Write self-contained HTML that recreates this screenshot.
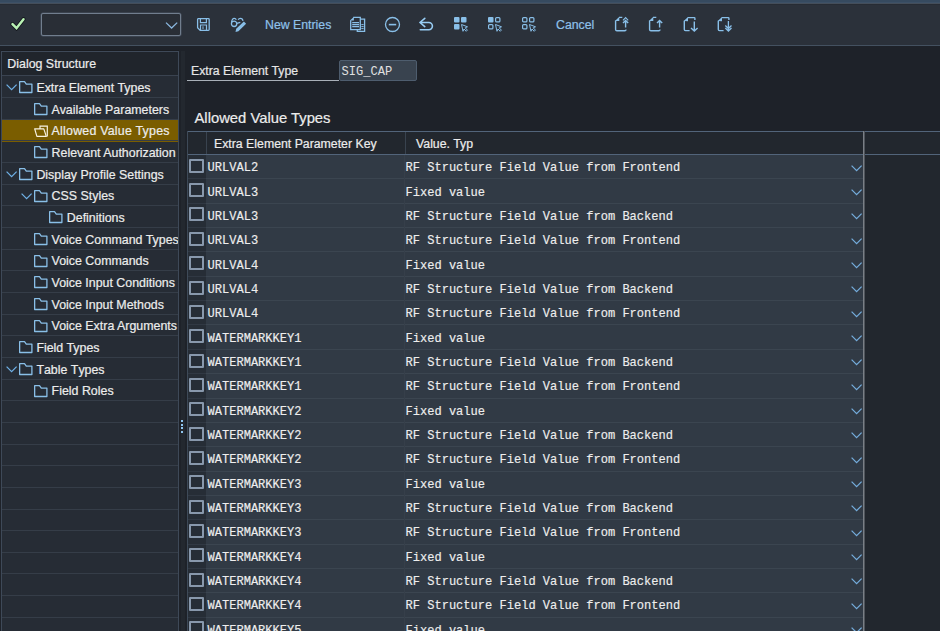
<!DOCTYPE html><html><head><meta charset="utf-8"><style>
*{margin:0;padding:0;box-sizing:border-box}
html,body{width:940px;height:631px;overflow:hidden;background:#1e2229;font-family:"Liberation Sans",sans-serif;position:relative}
.a{position:absolute}
.s{-webkit-text-stroke:0.2px currentColor}
.ttxt{color:#8fc1ea;font-size:12.3px;line-height:14px;white-space:nowrap}
.tr{left:2px;width:176px;height:21.66px;border-bottom:1px solid #353d48}
.tr.sel{background:#7a5d00}
.tt{color:#ececec;font-size:12.4px;white-space:nowrap;line-height:14px}
.mono{font-family:"Liberation Mono",monospace}
.cb{position:absolute;left:189.4px;width:14.4px;height:14px;border:2px solid #8898ac;border-radius:1px}
.kt{-webkit-text-stroke:0.15px currentColor;left:207.5px;color:#eeeeee;font-size:12.05px;line-height:14px;white-space:nowrap}
.vt{-webkit-text-stroke:0.15px currentColor;left:405.5px;color:#eeeeee;font-size:12.05px;line-height:14px;white-space:nowrap}
</style></head><body>

<div class="a" style="left:0;top:0;width:940px;height:46px;background:#2b313a"></div>
<div class="a" style="left:0;top:0;width:940px;height:2px;background:#364a5f"></div>
<div class="a" style="left:0;top:2px;width:940px;height:1px;background:#3c5066"></div>
<div class="a" style="left:0;top:3px;width:940px;height:1px;background:#444e5a"></div>
<div class="a" style="left:0;top:4px;width:940px;height:1px;background:#272c34"></div>
<div class="a" style="left:0;top:45px;width:940px;height:1px;background:#445160"></div>
<svg class="a" style="left:10px;top:15.5px" width="16" height="15" viewBox="0 0 16 15"><path d="M2.5 8.2l4 4 7-9" fill="none" stroke="#12161b" stroke-width="4" stroke-linecap="round"/><path d="M2.5 8.2l4 4 7-9" fill="none" stroke="#b9f2b4" stroke-width="2.5" stroke-linecap="round"/></svg>
<div class="a" style="left:40.5px;top:12.5px;width:140.5px;height:23.5px;border:1px solid #717e8e;box-shadow:0 0 0 0.5px #4a5563;border-radius:2px;background:#292e36"></div>
<svg class="a" style="left:165px;top:20.5px" width="13" height="9" viewBox="0 0 13 9"><path d="M1 1.6L6.6 7L12.2 1.6" fill="none" stroke="#8ab6de" stroke-width="1.3"/></svg>
<svg class="a" style="left:196px;top:17px" width="15" height="15" viewBox="0 0 15 15"><path d="M2.2 1.6h10.2q.8 0 .8.8v10.2q0 .8-.8.8h-8.2l-2.6-2.6v-8.4q0-.8.6-.8z" fill="none" stroke="#89bfe8" stroke-width="1.3"/><path d="M4.4 2v3.6h6v-3.6M4.5 13v-5h6v5" fill="none" stroke="#89bfe8" stroke-width="1.2"/><path d="M7 9.3v2.8" stroke="#89bfe8" stroke-width="1"/></svg>
<svg class="a" style="left:230px;top:17px" width="17" height="17" viewBox="0 0 17 17"><circle cx="4.1" cy="6.8" r="2.7" fill="none" stroke="#89bfe8" stroke-width="1.3"/><path d="M1.5 5.6C1.8 2.6 2.9 1.3 4.3 1.3C5.3 1.3 6 2 6.3 2.8M8.2 2.8C8.6 1.8 9.5 1.3 10.5 1.3C11.8 1.3 12.8 2.3 13 3.8M6.8 6.3L10.3 5.3" fill="none" stroke="#89bfe8" stroke-width="1.2"/><path d="M5.5 14.9L6.19 11.81L13.9 4.44L16.1 6.76L8.41 14.13Z" fill="#89bfe8"/></svg>
<div class="a ttxt s" style="left:265px;top:18px">New Entries</div>
<svg class="a" style="left:349px;top:16px" width="17" height="17" viewBox="0 0 17 17"><path d="M4.3 1.3H11.3V13.6H1.7V4.2" fill="none" stroke="#89bfe8" stroke-width="1.3"/><path d="M1 4.6L4.9 0.7V4.6Z" fill="#89bfe8"/><path d="M3.2 6.6H10M3.2 8.6H10M3.2 10.6H10" stroke="#89bfe8" stroke-width="1.1"/><path d="M11.5 3.2H15.6V15.3H8.3V14" fill="none" stroke="#89bfe8" stroke-width="1.3"/><path d="M12.3 8.6H14.6M12.3 10.6H14.6M12.3 12.6H14.6" stroke="#89bfe8" stroke-width="1"/></svg>
<svg class="a" style="left:383.5px;top:16px" width="17" height="17" viewBox="0 0 17 17"><circle cx="8.5" cy="8.5" r="7" fill="none" stroke="#89bfe8" stroke-width="1.3"/><path d="M4.8 8.6h7.4" stroke="#89bfe8" stroke-width="1.6"/></svg>
<svg class="a" style="left:414px;top:12px" width="24" height="24" viewBox="0 0 24 24"><path d="M10.8 6.3L5.9 10.5L10.8 14.6M5.9 10.5H14.8A3.6 3.6 0 0 1 14.8 17.7H6.3" fill="none" stroke="#98cdf4" stroke-width="1.6" stroke-linejoin="round" stroke-linecap="round"/></svg>
<svg class="a" style="left:453px;top:16px" width="16" height="16" viewBox="0 0 16 16"><rect x="1" y="1" width="5.5" height="5.5" rx="1" fill="#89bfe8"/><rect x="8" y="1" width="5.5" height="5.5" rx="1" fill="#89bfe8"/><rect x="1" y="8" width="5.5" height="5.5" rx="1" fill="#89bfe8"/><path d="M8.5 8.5l6 2.3-2.3 1 2.2 2.3-1.2 1.2-2.2-2.3-1 2.3z" fill="none" stroke="#89bfe8" stroke-width="1"/></svg>
<svg class="a" style="left:487px;top:16px" width="16" height="16" viewBox="0 0 16 16"><rect x="1" y="1" width="5.5" height="5.5" rx="1" fill="#89bfe8"/><rect x="8.6" y="1.6" width="4.3" height="4.3" rx="1" fill="none" stroke="#89bfe8" stroke-width="1.2"/><rect x="1.6" y="8.6" width="4.3" height="4.3" rx="1" fill="none" stroke="#89bfe8" stroke-width="1.2"/><path d="M8.5 8.5l6 2.3-2.3 1 2.2 2.3-1.2 1.2-2.2-2.3-1 2.3z" fill="none" stroke="#89bfe8" stroke-width="1"/></svg>
<svg class="a" style="left:521px;top:16px" width="16" height="16" viewBox="0 0 16 16"><rect x="1.6" y="1.6" width="4.3" height="4.3" rx="1" fill="none" stroke="#89bfe8" stroke-width="1.2"/><rect x="8.6" y="1.6" width="4.3" height="4.3" rx="1" fill="none" stroke="#89bfe8" stroke-width="1.2"/><rect x="1.6" y="8.6" width="4.3" height="4.3" rx="1" fill="none" stroke="#89bfe8" stroke-width="1.2"/><path d="M8.5 8.5l6 2.3-2.3 1 2.2 2.3-1.2 1.2-2.2-2.3-1 2.3z" fill="none" stroke="#89bfe8" stroke-width="1"/></svg>
<div class="a ttxt s" style="left:556px;top:18px">Cancel</div>
<svg class="a" style="left:614px;top:16px" width="17" height="17" viewBox="0 0 17 17"><path d="M5 1.4H8.3M1.6 4.6V13.4Q1.6 14.7 2.9 14.7H10.8Q12 14.7 12 13.4" fill="none" stroke="#89bfe8" stroke-width="1.4"/><path d="M1 4.9L5.3 0.8V5.1Z" fill="#89bfe8"/><path d="M11.6 11.6V4.6M9 7.1L11.6 4.5L14.2 7.1" fill="none" stroke="#89bfe8" stroke-width="1.4"/><path d="M9 4.3L11.6 1.7L14.2 4.3" fill="none" stroke="#89bfe8" stroke-width="1.2"/></svg>
<svg class="a" style="left:648px;top:16px" width="17" height="17" viewBox="0 0 17 17"><path d="M5 1.4H8.3M1.6 4.6V13.4Q1.6 14.7 2.9 14.7H10.8Q12 14.7 12 13.4" fill="none" stroke="#89bfe8" stroke-width="1.4"/><path d="M1 4.9L5.3 0.8V5.1Z" fill="#89bfe8"/><path d="M11.6 11.6V4.6M9 7.1L11.6 4.5L14.2 7.1" fill="none" stroke="#89bfe8" stroke-width="1.4"/></svg>
<svg class="a" style="left:683px;top:16px" width="17" height="17" viewBox="0 0 17 17"><path d="M4.8 1.6H11.2Q11.9 1.6 11.9 2.3V3.9M1.3 4.8V13.5Q1.3 14.6 2.5 14.6H6.6" fill="none" stroke="#89bfe8" stroke-width="1.4"/><path d="M0.7 5.1L5 1V5.3Z" fill="#89bfe8"/><path d="M11.3 5.5V14.6M8 12L11.3 15.1L14.6 12" fill="none" stroke="#89bfe8" stroke-width="1.4"/></svg>
<svg class="a" style="left:717px;top:16px" width="17" height="17" viewBox="0 0 17 17"><path d="M4.8 1.6H11.2Q11.9 1.6 11.9 2.3V3.9M1.3 4.8V13.5Q1.3 14.6 2.5 14.6H6.6" fill="none" stroke="#89bfe8" stroke-width="1.4"/><path d="M0.7 5.1L5 1V5.3Z" fill="#89bfe8"/><path d="M11.4 5V14.2M8.3 9.5L11.4 12.5L14.5 9.5M8.3 12L11.4 15L14.5 12" fill="none" stroke="#89bfe8" stroke-width="1.3"/></svg>
<div class="a" style="left:1px;top:51px;width:178px;height:600px;border:1px solid #3e4958;background:#262c35;box-shadow:0 -1px 0 #1a1d22"></div>
<div class="a" style="left:2px;top:52px;width:176px;height:23px;background:#20252c"></div>
<div class="a tt s" style="left:7.3px;top:57px">Dialog Structure</div>
<div class="a" style="left:2px;top:75px;width:176px;height:1px;background:#3a4350"></div>
<div class="a" style="left:2px;top:97px;width:176px;height:1px;background:#353d48"></div>
<div class="a" style="left:2px;top:119px;width:176px;height:1px;background:#353d48"></div>
<div class="a" style="left:2px;top:119.82px;width:176px;height:22.06px;background:#7a5d00"></div>
<div class="a" style="left:2px;top:140px;width:176px;height:1px;background:#353d48"></div>
<div class="a" style="left:2px;top:162px;width:176px;height:1px;background:#353d48"></div>
<div class="a" style="left:2px;top:184px;width:176px;height:1px;background:#353d48"></div>
<div class="a" style="left:2px;top:205px;width:176px;height:1px;background:#353d48"></div>
<div class="a" style="left:2px;top:227px;width:176px;height:1px;background:#353d48"></div>
<div class="a" style="left:2px;top:249px;width:176px;height:1px;background:#353d48"></div>
<div class="a" style="left:2px;top:270px;width:176px;height:1px;background:#353d48"></div>
<div class="a" style="left:2px;top:292px;width:176px;height:1px;background:#353d48"></div>
<div class="a" style="left:2px;top:314px;width:176px;height:1px;background:#353d48"></div>
<div class="a" style="left:2px;top:335px;width:176px;height:1px;background:#353d48"></div>
<div class="a" style="left:2px;top:357px;width:176px;height:1px;background:#353d48"></div>
<div class="a" style="left:2px;top:379px;width:176px;height:1px;background:#353d48"></div>
<div class="a" style="left:2px;top:400px;width:176px;height:1px;background:#353d48"></div>
<div class="a" style="left:2px;top:422px;width:176px;height:1px;background:#353d48"></div>
<div class="a" style="left:2px;top:444px;width:176px;height:1px;background:#353d48"></div>
<div class="a" style="left:2px;top:465px;width:176px;height:1px;background:#353d48"></div>
<div class="a" style="left:2px;top:487px;width:176px;height:1px;background:#353d48"></div>
<div class="a" style="left:2px;top:509px;width:176px;height:1px;background:#353d48"></div>
<div class="a" style="left:2px;top:530px;width:176px;height:1px;background:#353d48"></div>
<div class="a" style="left:2px;top:552px;width:176px;height:1px;background:#353d48"></div>
<div class="a" style="left:2px;top:573px;width:176px;height:1px;background:#353d48"></div>
<div class="a" style="left:2px;top:595px;width:176px;height:1px;background:#353d48"></div>
<div class="a" style="left:2px;top:617px;width:176px;height:1px;background:#353d48"></div>
<div class="a" style="left:2px;top:638px;width:176px;height:1px;background:#353d48"></div>
<div class="a" style="left:2px;top:660px;width:176px;height:1px;background:#353d48"></div>
<div class="a" style="left:2px;top:51.5px;width:176px;overflow:hidden;height:580px">
<svg class="a" style="left:4.00px;top:32.90px" width="12" height="7" viewBox="0 0 12 7"><path d="M0.6 0.6L5.6 5.6L10.6 0.6" fill="none" stroke="#6fb0e6" stroke-width="1.25"/></svg>
<svg class="a" style="left:16.60px;top:29.90px" width="15" height="13" viewBox="0 0 15 13"><path d="M0.65 0.65H5.5L7.3 3.1H12.9V11.5H0.65Z" fill="none" stroke="#89bfe8" stroke-width="1.3" stroke-linejoin="round"/></svg>
<div class="a tt s" style="left:34.40px;top:29.60px">Extra Element Types</div>
<svg class="a" style="left:31.80px;top:51.56px" width="15" height="13" viewBox="0 0 15 13"><path d="M0.65 0.65H5.5L7.3 3.1H12.9V11.5H0.65Z" fill="none" stroke="#89bfe8" stroke-width="1.3" stroke-linejoin="round"/></svg>
<div class="a tt s" style="left:49.60px;top:51.26px">Available Parameters</div>
<svg class="a" style="left:31.80px;top:73.62px" width="15" height="13" viewBox="0 0 15 13"><path d="M6 3.9V1.2H13.3V11.4" fill="none" stroke="#f8f2e2" stroke-width="1.2"/><path d="M0.7 3.9H9.8L12.3 11.4H2.9Z" fill="none" stroke="#f8f2e2" stroke-width="1.2" stroke-linejoin="round"/></svg>
<div class="a tt s" style="left:49.60px;top:72.92px;letter-spacing:0.22px">Allowed Value Types</div>
<svg class="a" style="left:31.80px;top:94.88px" width="15" height="13" viewBox="0 0 15 13"><path d="M0.65 0.65H5.5L7.3 3.1H12.9V11.5H0.65Z" fill="none" stroke="#89bfe8" stroke-width="1.3" stroke-linejoin="round"/></svg>
<div class="a tt s" style="left:49.60px;top:94.58px">Relevant Authorization</div>
<svg class="a" style="left:4.00px;top:119.54px" width="12" height="7" viewBox="0 0 12 7"><path d="M0.6 0.6L5.6 5.6L10.6 0.6" fill="none" stroke="#6fb0e6" stroke-width="1.25"/></svg>
<svg class="a" style="left:16.60px;top:116.54px" width="15" height="13" viewBox="0 0 15 13"><path d="M0.65 0.65H5.5L7.3 3.1H12.9V11.5H0.65Z" fill="none" stroke="#89bfe8" stroke-width="1.3" stroke-linejoin="round"/></svg>
<div class="a tt s" style="left:34.40px;top:116.24px">Display Profile Settings</div>
<svg class="a" style="left:19.20px;top:141.20px" width="12" height="7" viewBox="0 0 12 7"><path d="M0.6 0.6L5.6 5.6L10.6 0.6" fill="none" stroke="#6fb0e6" stroke-width="1.25"/></svg>
<svg class="a" style="left:31.80px;top:138.20px" width="15" height="13" viewBox="0 0 15 13"><path d="M0.65 0.65H5.5L7.3 3.1H12.9V11.5H0.65Z" fill="none" stroke="#89bfe8" stroke-width="1.3" stroke-linejoin="round"/></svg>
<div class="a tt s" style="left:49.60px;top:137.90px">CSS Styles</div>
<svg class="a" style="left:47.00px;top:159.86px" width="15" height="13" viewBox="0 0 15 13"><path d="M0.65 0.65H5.5L7.3 3.1H12.9V11.5H0.65Z" fill="none" stroke="#89bfe8" stroke-width="1.3" stroke-linejoin="round"/></svg>
<div class="a tt s" style="left:64.80px;top:159.56px">Definitions</div>
<svg class="a" style="left:31.80px;top:181.52px" width="15" height="13" viewBox="0 0 15 13"><path d="M0.65 0.65H5.5L7.3 3.1H12.9V11.5H0.65Z" fill="none" stroke="#89bfe8" stroke-width="1.3" stroke-linejoin="round"/></svg>
<div class="a tt s" style="left:49.60px;top:181.22px">Voice Command Types</div>
<svg class="a" style="left:31.80px;top:203.18px" width="15" height="13" viewBox="0 0 15 13"><path d="M0.65 0.65H5.5L7.3 3.1H12.9V11.5H0.65Z" fill="none" stroke="#89bfe8" stroke-width="1.3" stroke-linejoin="round"/></svg>
<div class="a tt s" style="left:49.60px;top:202.88px">Voice Commands</div>
<svg class="a" style="left:31.80px;top:224.84px" width="15" height="13" viewBox="0 0 15 13"><path d="M0.65 0.65H5.5L7.3 3.1H12.9V11.5H0.65Z" fill="none" stroke="#89bfe8" stroke-width="1.3" stroke-linejoin="round"/></svg>
<div class="a tt s" style="left:49.60px;top:224.54px">Voice Input Conditions</div>
<svg class="a" style="left:31.80px;top:246.50px" width="15" height="13" viewBox="0 0 15 13"><path d="M0.65 0.65H5.5L7.3 3.1H12.9V11.5H0.65Z" fill="none" stroke="#89bfe8" stroke-width="1.3" stroke-linejoin="round"/></svg>
<div class="a tt s" style="left:49.60px;top:246.20px">Voice Input Methods</div>
<svg class="a" style="left:31.80px;top:268.16px" width="15" height="13" viewBox="0 0 15 13"><path d="M0.65 0.65H5.5L7.3 3.1H12.9V11.5H0.65Z" fill="none" stroke="#89bfe8" stroke-width="1.3" stroke-linejoin="round"/></svg>
<div class="a tt s" style="left:49.60px;top:267.86px">Voice Extra Arguments</div>
<svg class="a" style="left:16.60px;top:289.82px" width="15" height="13" viewBox="0 0 15 13"><path d="M0.65 0.65H5.5L7.3 3.1H12.9V11.5H0.65Z" fill="none" stroke="#89bfe8" stroke-width="1.3" stroke-linejoin="round"/></svg>
<div class="a tt s" style="left:34.40px;top:289.52px">Field Types</div>
<svg class="a" style="left:4.00px;top:314.48px" width="12" height="7" viewBox="0 0 12 7"><path d="M0.6 0.6L5.6 5.6L10.6 0.6" fill="none" stroke="#6fb0e6" stroke-width="1.25"/></svg>
<svg class="a" style="left:16.60px;top:311.48px" width="15" height="13" viewBox="0 0 15 13"><path d="M0.65 0.65H5.5L7.3 3.1H12.9V11.5H0.65Z" fill="none" stroke="#89bfe8" stroke-width="1.3" stroke-linejoin="round"/></svg>
<div class="a tt s" style="left:34.40px;top:311.18px;font-kerning:none">Table Types</div>
<svg class="a" style="left:31.80px;top:333.14px" width="15" height="13" viewBox="0 0 15 13"><path d="M0.65 0.65H5.5L7.3 3.1H12.9V11.5H0.65Z" fill="none" stroke="#89bfe8" stroke-width="1.3" stroke-linejoin="round"/></svg>
<div class="a tt s" style="left:49.60px;top:332.84px">Field Roles</div>
</div>
<div class="a" style="left:180.5px;top:51px;width:4px;height:580px;background:#23282f"></div>
<div class="a" style="left:181px;top:420.2px;width:2px;height:2px;background:#8fc6f0"></div>
<div class="a" style="left:181px;top:423.8px;width:2px;height:2px;background:#8fc6f0"></div>
<div class="a" style="left:181px;top:427.4px;width:2px;height:2px;background:#8fc6f0"></div>
<div class="a" style="left:181px;top:431.0px;width:2px;height:2px;background:#8fc6f0"></div>
<div class="a tt s" style="left:191px;top:63.5px;color:#e6e6e6;font-size:12.3px">Extra Element Type</div>
<div class="a" style="left:187px;top:80px;width:152px;height:1px;background:#a9b0b8"></div>
<div class="a" style="left:339px;top:59.5px;width:78px;height:21.5px;border:1px solid #4e5d6e;border-radius:2px;background:#39434f"></div>
<div class="a mono" style="left:341.5px;top:64.7px;color:#e0e0e0;font-size:12.05px;line-height:14px">SIG_CAP</div>
<div class="a s" style="left:194.5px;top:110px;color:#ececec;font-size:14.8px;line-height:16px;white-space:nowrap">Allowed Value Types</div>
<div class="a" style="left:187px;top:131px;width:753px;height:24px;background:#22272e;border-top:1px solid #52647a;border-bottom:1px solid #52647a"></div>
<div class="a" style="left:187px;top:131px;width:1px;height:500px;background:#3e4a58"></div>
<div class="a" style="left:206px;top:132px;width:1px;height:22px;background:#39434f"></div>
<div class="a" style="left:404.5px;top:132px;width:1px;height:22px;background:#39434f"></div>
<div class="a tt s" style="left:214px;top:137px;font-size:12.3px">Extra Element Parameter Key</div>
<div class="a tt s" style="left:416px;top:137px;font-size:12.3px">Value. Typ</div>
<div class="a" style="left:864px;top:155px;width:76px;height:476px;background:#22272e"></div>
<div class="a" style="left:188px;top:155px;width:18px;height:476px;background:#262d36"></div>
<div class="a" style="left:206px;top:155px;width:658px;height:476px;background:#313a45"></div>
<div class="a" style="left:188px;top:178px;width:18px;height:1px;background:#303843"></div>
<div class="a" style="left:206px;top:178px;width:658px;height:1px;background:#3b4550"></div>
<div class="cb" style="top:158.80px"></div>
<div class="a mono kt" style="top:161.20px">URLVAL2</div>
<div class="a mono vt" style="top:161.20px">RF Structure Field Value from Frontend</div>
<svg class="a" style="left:850.50px;top:164.50px" width="12" height="7" viewBox="0 0 12 7"><path d="M0.6 0.6L5.6 5.6L10.6 0.6" fill="none" stroke="#74acdc" stroke-width="1.25"/></svg>
<div class="a" style="left:188px;top:203px;width:18px;height:1px;background:#303843"></div>
<div class="a" style="left:206px;top:203px;width:658px;height:1px;background:#3b4550"></div>
<div class="cb" style="top:183.14px"></div>
<div class="a mono kt" style="top:185.54px">URLVAL3</div>
<div class="a mono vt" style="top:185.54px">Fixed value</div>
<svg class="a" style="left:850.50px;top:188.84px" width="12" height="7" viewBox="0 0 12 7"><path d="M0.6 0.6L5.6 5.6L10.6 0.6" fill="none" stroke="#74acdc" stroke-width="1.25"/></svg>
<div class="a" style="left:188px;top:227px;width:18px;height:1px;background:#303843"></div>
<div class="a" style="left:206px;top:227px;width:658px;height:1px;background:#3b4550"></div>
<div class="cb" style="top:207.48px"></div>
<div class="a mono kt" style="top:209.88px">URLVAL3</div>
<div class="a mono vt" style="top:209.88px">RF Structure Field Value from Backend</div>
<svg class="a" style="left:850.50px;top:213.18px" width="12" height="7" viewBox="0 0 12 7"><path d="M0.6 0.6L5.6 5.6L10.6 0.6" fill="none" stroke="#74acdc" stroke-width="1.25"/></svg>
<div class="a" style="left:188px;top:251px;width:18px;height:1px;background:#303843"></div>
<div class="a" style="left:206px;top:251px;width:658px;height:1px;background:#3b4550"></div>
<div class="cb" style="top:231.82px"></div>
<div class="a mono kt" style="top:234.22px">URLVAL3</div>
<div class="a mono vt" style="top:234.22px">RF Structure Field Value from Frontend</div>
<svg class="a" style="left:850.50px;top:237.52px" width="12" height="7" viewBox="0 0 12 7"><path d="M0.6 0.6L5.6 5.6L10.6 0.6" fill="none" stroke="#74acdc" stroke-width="1.25"/></svg>
<div class="a" style="left:188px;top:276px;width:18px;height:1px;background:#303843"></div>
<div class="a" style="left:206px;top:276px;width:658px;height:1px;background:#3b4550"></div>
<div class="cb" style="top:256.16px"></div>
<div class="a mono kt" style="top:258.56px">URLVAL4</div>
<div class="a mono vt" style="top:258.56px">Fixed value</div>
<svg class="a" style="left:850.50px;top:261.86px" width="12" height="7" viewBox="0 0 12 7"><path d="M0.6 0.6L5.6 5.6L10.6 0.6" fill="none" stroke="#74acdc" stroke-width="1.25"/></svg>
<div class="a" style="left:188px;top:300px;width:18px;height:1px;background:#303843"></div>
<div class="a" style="left:206px;top:300px;width:658px;height:1px;background:#3b4550"></div>
<div class="cb" style="top:280.50px"></div>
<div class="a mono kt" style="top:282.90px">URLVAL4</div>
<div class="a mono vt" style="top:282.90px">RF Structure Field Value from Backend</div>
<svg class="a" style="left:850.50px;top:286.20px" width="12" height="7" viewBox="0 0 12 7"><path d="M0.6 0.6L5.6 5.6L10.6 0.6" fill="none" stroke="#74acdc" stroke-width="1.25"/></svg>
<div class="a" style="left:188px;top:324px;width:18px;height:1px;background:#303843"></div>
<div class="a" style="left:206px;top:324px;width:658px;height:1px;background:#3b4550"></div>
<div class="cb" style="top:304.84px"></div>
<div class="a mono kt" style="top:307.24px">URLVAL4</div>
<div class="a mono vt" style="top:307.24px">RF Structure Field Value from Frontend</div>
<svg class="a" style="left:850.50px;top:310.54px" width="12" height="7" viewBox="0 0 12 7"><path d="M0.6 0.6L5.6 5.6L10.6 0.6" fill="none" stroke="#74acdc" stroke-width="1.25"/></svg>
<div class="a" style="left:188px;top:349px;width:18px;height:1px;background:#303843"></div>
<div class="a" style="left:206px;top:349px;width:658px;height:1px;background:#3b4550"></div>
<div class="cb" style="top:329.18px"></div>
<div class="a mono kt" style="top:331.58px">WATERMARKKEY1</div>
<div class="a mono vt" style="top:331.58px">Fixed value</div>
<svg class="a" style="left:850.50px;top:334.88px" width="12" height="7" viewBox="0 0 12 7"><path d="M0.6 0.6L5.6 5.6L10.6 0.6" fill="none" stroke="#74acdc" stroke-width="1.25"/></svg>
<div class="a" style="left:188px;top:373px;width:18px;height:1px;background:#303843"></div>
<div class="a" style="left:206px;top:373px;width:658px;height:1px;background:#3b4550"></div>
<div class="cb" style="top:353.52px"></div>
<div class="a mono kt" style="top:355.92px">WATERMARKKEY1</div>
<div class="a mono vt" style="top:355.92px">RF Structure Field Value from Backend</div>
<svg class="a" style="left:850.50px;top:359.22px" width="12" height="7" viewBox="0 0 12 7"><path d="M0.6 0.6L5.6 5.6L10.6 0.6" fill="none" stroke="#74acdc" stroke-width="1.25"/></svg>
<div class="a" style="left:188px;top:398px;width:18px;height:1px;background:#303843"></div>
<div class="a" style="left:206px;top:398px;width:658px;height:1px;background:#3b4550"></div>
<div class="cb" style="top:377.86px"></div>
<div class="a mono kt" style="top:380.26px">WATERMARKKEY1</div>
<div class="a mono vt" style="top:380.26px">RF Structure Field Value from Frontend</div>
<svg class="a" style="left:850.50px;top:383.56px" width="12" height="7" viewBox="0 0 12 7"><path d="M0.6 0.6L5.6 5.6L10.6 0.6" fill="none" stroke="#74acdc" stroke-width="1.25"/></svg>
<div class="a" style="left:188px;top:422px;width:18px;height:1px;background:#303843"></div>
<div class="a" style="left:206px;top:422px;width:658px;height:1px;background:#3b4550"></div>
<div class="cb" style="top:402.20px"></div>
<div class="a mono kt" style="top:404.60px">WATERMARKKEY2</div>
<div class="a mono vt" style="top:404.60px">Fixed value</div>
<svg class="a" style="left:850.50px;top:407.90px" width="12" height="7" viewBox="0 0 12 7"><path d="M0.6 0.6L5.6 5.6L10.6 0.6" fill="none" stroke="#74acdc" stroke-width="1.25"/></svg>
<div class="a" style="left:188px;top:446px;width:18px;height:1px;background:#303843"></div>
<div class="a" style="left:206px;top:446px;width:658px;height:1px;background:#3b4550"></div>
<div class="cb" style="top:426.54px"></div>
<div class="a mono kt" style="top:428.94px">WATERMARKKEY2</div>
<div class="a mono vt" style="top:428.94px">RF Structure Field Value from Backend</div>
<svg class="a" style="left:850.50px;top:432.24px" width="12" height="7" viewBox="0 0 12 7"><path d="M0.6 0.6L5.6 5.6L10.6 0.6" fill="none" stroke="#74acdc" stroke-width="1.25"/></svg>
<div class="a" style="left:188px;top:471px;width:18px;height:1px;background:#303843"></div>
<div class="a" style="left:206px;top:471px;width:658px;height:1px;background:#3b4550"></div>
<div class="cb" style="top:450.88px"></div>
<div class="a mono kt" style="top:453.28px">WATERMARKKEY2</div>
<div class="a mono vt" style="top:453.28px">RF Structure Field Value from Frontend</div>
<svg class="a" style="left:850.50px;top:456.58px" width="12" height="7" viewBox="0 0 12 7"><path d="M0.6 0.6L5.6 5.6L10.6 0.6" fill="none" stroke="#74acdc" stroke-width="1.25"/></svg>
<div class="a" style="left:188px;top:495px;width:18px;height:1px;background:#303843"></div>
<div class="a" style="left:206px;top:495px;width:658px;height:1px;background:#3b4550"></div>
<div class="cb" style="top:475.22px"></div>
<div class="a mono kt" style="top:477.62px">WATERMARKKEY3</div>
<div class="a mono vt" style="top:477.62px">Fixed value</div>
<svg class="a" style="left:850.50px;top:480.92px" width="12" height="7" viewBox="0 0 12 7"><path d="M0.6 0.6L5.6 5.6L10.6 0.6" fill="none" stroke="#74acdc" stroke-width="1.25"/></svg>
<div class="a" style="left:188px;top:519px;width:18px;height:1px;background:#303843"></div>
<div class="a" style="left:206px;top:519px;width:658px;height:1px;background:#3b4550"></div>
<div class="cb" style="top:499.56px"></div>
<div class="a mono kt" style="top:501.96px">WATERMARKKEY3</div>
<div class="a mono vt" style="top:501.96px">RF Structure Field Value from Backend</div>
<svg class="a" style="left:850.50px;top:505.26px" width="12" height="7" viewBox="0 0 12 7"><path d="M0.6 0.6L5.6 5.6L10.6 0.6" fill="none" stroke="#74acdc" stroke-width="1.25"/></svg>
<div class="a" style="left:188px;top:544px;width:18px;height:1px;background:#303843"></div>
<div class="a" style="left:206px;top:544px;width:658px;height:1px;background:#3b4550"></div>
<div class="cb" style="top:523.90px"></div>
<div class="a mono kt" style="top:526.30px">WATERMARKKEY3</div>
<div class="a mono vt" style="top:526.30px">RF Structure Field Value from Frontend</div>
<svg class="a" style="left:850.50px;top:529.60px" width="12" height="7" viewBox="0 0 12 7"><path d="M0.6 0.6L5.6 5.6L10.6 0.6" fill="none" stroke="#74acdc" stroke-width="1.25"/></svg>
<div class="a" style="left:188px;top:568px;width:18px;height:1px;background:#303843"></div>
<div class="a" style="left:206px;top:568px;width:658px;height:1px;background:#3b4550"></div>
<div class="cb" style="top:548.24px"></div>
<div class="a mono kt" style="top:550.64px">WATERMARKKEY4</div>
<div class="a mono vt" style="top:550.64px">Fixed value</div>
<svg class="a" style="left:850.50px;top:553.94px" width="12" height="7" viewBox="0 0 12 7"><path d="M0.6 0.6L5.6 5.6L10.6 0.6" fill="none" stroke="#74acdc" stroke-width="1.25"/></svg>
<div class="a" style="left:188px;top:592px;width:18px;height:1px;background:#303843"></div>
<div class="a" style="left:206px;top:592px;width:658px;height:1px;background:#3b4550"></div>
<div class="cb" style="top:572.58px"></div>
<div class="a mono kt" style="top:574.98px">WATERMARKKEY4</div>
<div class="a mono vt" style="top:574.98px">RF Structure Field Value from Backend</div>
<svg class="a" style="left:850.50px;top:578.28px" width="12" height="7" viewBox="0 0 12 7"><path d="M0.6 0.6L5.6 5.6L10.6 0.6" fill="none" stroke="#74acdc" stroke-width="1.25"/></svg>
<div class="a" style="left:188px;top:617px;width:18px;height:1px;background:#303843"></div>
<div class="a" style="left:206px;top:617px;width:658px;height:1px;background:#3b4550"></div>
<div class="cb" style="top:596.92px"></div>
<div class="a mono kt" style="top:599.32px">WATERMARKKEY4</div>
<div class="a mono vt" style="top:599.32px">RF Structure Field Value from Frontend</div>
<svg class="a" style="left:850.50px;top:602.62px" width="12" height="7" viewBox="0 0 12 7"><path d="M0.6 0.6L5.6 5.6L10.6 0.6" fill="none" stroke="#74acdc" stroke-width="1.25"/></svg>
<div class="cb" style="top:621.26px"></div>
<div class="a mono kt" style="top:623.66px">WATERMARKKEY5</div>
<div class="a mono vt" style="top:623.66px">Fixed value</div>
<svg class="a" style="left:850.50px;top:626.96px" width="12" height="7" viewBox="0 0 12 7"><path d="M0.6 0.6L5.6 5.6L10.6 0.6" fill="none" stroke="#74acdc" stroke-width="1.25"/></svg>
<div class="a" style="left:404px;top:155px;width:1px;height:476px;background:#363f4a"></div>
<div class="a" style="left:863px;top:131px;width:1px;height:500px;background:#7a7f86"></div>
<div class="a" style="left:864px;top:131px;width:1px;height:500px;background:#50555c"></div>
</body></html>
